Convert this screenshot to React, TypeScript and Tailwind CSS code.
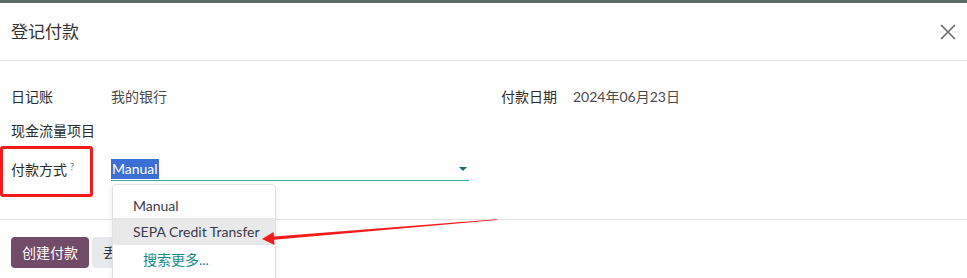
import React from 'react';

const font = { fontFamily: 'Lato, "Noto Sans CJK SC", sans-serif' };

// Payment registration dialog with the payment-method dropdown open
const CloseIcon = () => (
    <svg width="16" height="16" viewBox="0 0 16 16" className="text-[#6b6b6b]">
        <path d="M1 1 L15 15 M15 1 L1 15" stroke="currentColor" strokeWidth="1.6" />
    </svg>
);

const App: React.FC = () => {
    return (
        <div className="relative w-[967px] h-[278px] overflow-hidden bg-white text-[14px] text-[#2b2b2b]" style={font}>
            {/* sliver of the page behind the dialog */}
            <div className="h-[3px] bg-[#5d6c68]" />

            {/* Header */}
            <div className="h-[58px] flex items-center justify-between pl-[11px] pr-[7px] border-b border-[#e3e3e3]">
                <h2 className="text-[17px] text-[#333]">登记付款</h2>
                <button className="p-1" aria-label="关闭">
                    <CloseIcon />
                </button>
            </div>

            {/* Body */}
            <div className="pl-[11px] pt-[24px] h-[158px]">
                <div className="flex h-[22px] items-center">
                    <span className="w-[100px]">日记账</span>
                    <span className="w-[390px] text-[#4a4a4a]">我的银行</span>
                    <span className="w-[72px]">付款日期</span>
                    <span className="text-[#4a4a4a]">2024年06月23日</span>
                </div>
                <div className="flex h-[22px] items-center mt-[12px]">
                    <span>现金流量项目</span>
                </div>
                <div className="flex h-[24px] items-center mt-[16px]">
                    <span className="w-[100px]">
                        付款方式<span className="relative -top-[5px] text-[9px] text-[#4a6a8a] ml-[3px]">?</span>
                    </span>
                    <div className="w-[358px] h-[24px] flex items-center justify-between border-b-[1.5px] border-[#3aa9a6]">
                        <span className="bg-[#3b6fd4] text-white px-[1px] leading-[20px]">Manual</span>
                        <span className="w-0 h-0 border-l-[4px] border-r-[4px] border-t-[4px] border-l-transparent border-r-transparent border-t-[#1b6d6b] mr-[2px]" />
                    </div>
                </div>
            </div>

            {/* Footer */}
            <div className="border-t border-[#e3e3e3] pl-[11px] pt-[17px] flex gap-[3px]">
                <button className="h-[31px] px-[11px] rounded-[4px] bg-[#714b67] text-white">创建付款</button>
                <button className="h-[31px] px-[11px] rounded-[4px] bg-[#e7e9ed] text-[#333]">丢弃</button>
            </div>

            {/* Open dropdown */}
            <div className="absolute left-[112px] top-[184px] w-[164px] h-[110px] bg-white border border-[#e2e2e2] rounded-[4px] shadow-[0_2px_6px_rgba(0,0,0,0.08)] pt-[7px]">
                <div className="h-[26px] flex items-center pl-[20px] text-[#3a3a4a]">Manual</div>
                <div className="h-[27px] flex items-center pl-[20px] bg-[#e9e9e9] text-[#3a3a4a]">SEPA Credit Transfer</div>
                <div className="h-[28px] flex items-center pl-[30px] text-[#138a8a]">搜索更多...</div>
            </div>

            {/* Annotation: red frame */}
            <div className="absolute left-0 top-[146px] w-[93px] h-[51px] border-[3px] border-[#f51b1b] rounded-[3px]" />

            {/* Annotation: red arrow */}
            <svg className="absolute left-0 top-0" width="967" height="278">
                <polygon
                    points="262,239 273.5,232 274,236.5 497,219.2 497,219.9 274,239.8 274.5,245"
                    fill="#f31c1c"
                />
            </svg>
        </div>
    );
};

export default App;
